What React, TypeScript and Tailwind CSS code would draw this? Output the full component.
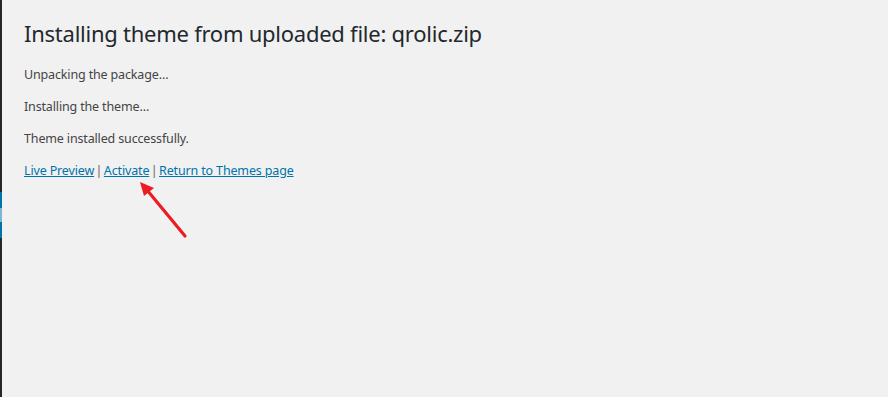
import React from "react";

export default function App() {
  return (
    <div className="flex h-[397px] w-[888px] overflow-hidden bg-[#f1f1f1]" style={{ fontFamily: '"Noto Sans", "Open Sans", sans-serif' }}>
      <div className="flex w-[2px] shrink-0 flex-col bg-[#23282d]">
        <div className="h-[192px]" />
        <div className="h-[16px] bg-[#0073aa]" />
        <div className="h-[14px] bg-[#7fb3cf]" />
        <div className="h-[16px] bg-[#0073aa]" />
      </div>
      <div className="relative flex-1 pl-[22px] pt-[17px] text-[#23282d]">
        <h1 className="text-[22px] leading-[32px] font-normal tracking-[-0.25px]">Installing theme from uploaded file: qrolic.zip</h1>
        <div className="mt-[16px] flex flex-col gap-[13px] text-[12.5px] leading-[19px] tracking-[-0.15px] text-[#444]">
          <p>Unpacking the package…</p>
          <p>Installing the theme…</p>
          <p>Theme installed successfully.</p>
          <p className="flex items-baseline">
            <a className="text-[#0073aa] underline">Live Preview</a>
            <span className="mx-[1.5px] text-[#666]">|</span>
            <a className="text-[#0073aa] underline">Activate</a>
            <span className="mx-[1.5px] text-[#666]">|</span>
            <a className="text-[#0073aa] underline">Return to Themes page</a>
          </p>
        </div>
        <svg className="absolute left-[136px] top-[180px]" width="50" height="60" viewBox="0 0 50 60">
          <line x1="47" y1="56" x2="9" y2="10" stroke="#ec1c24" strokeWidth="3.2" strokeLinecap="round" />
          <polygon points="2,2 16,8 6,16" fill="#ec1c24" />
        </svg>
      </div>
    </div>
  );
}
